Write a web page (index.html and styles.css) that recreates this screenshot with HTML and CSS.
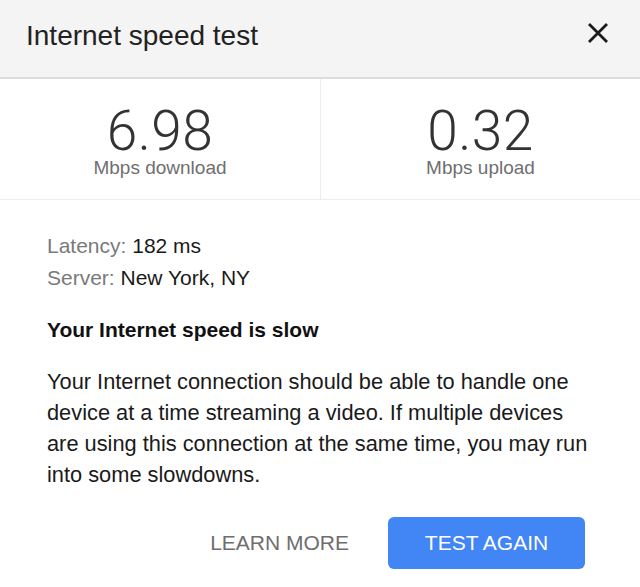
FILE: index.html
```html
<!DOCTYPE html>
<html>
<head>
<meta charset="utf-8">
<link rel="stylesheet" href="styles.css">
</head>
<body>
<div class="dialog">
  <header class="header">
    <h1 class="title">Internet speed test</h1>
    <button class="close" aria-label="Close">
      <svg width="22" height="22" viewBox="0 0 22 22"><path d="M2 2L20 20M20 2L2 20" stroke="#1a1a1a" stroke-width="2.8" fill="none"/></svg>
    </button>
  </header>
  <section class="stats">
    <div class="stat">
      <div class="value">6.98</div>
      <div class="unit">Mbps download</div>
    </div>
    <div class="stat">
      <div class="value">0.32</div>
      <div class="unit">Mbps upload</div>
    </div>
  </section>
  <section class="body">
    <div class="meta">
      <div><span class="label">Latency:</span> 182 ms</div>
      <div><span class="label">Server:</span> New York, NY</div>
    </div>
    <h2 class="verdict">Your Internet speed is slow</h2>
    <p class="desc">Your Internet connection should be able to handle one device at a time streaming a video. If multiple devices are using this connection at the same time, you may run into some slowdowns.</p>
    <div class="actions">
      <button class="link">LEARN MORE</button>
      <button class="primary">TEST AGAIN</button>
    </div>
  </section>
</div>
</body>
</html>
```
FILE: styles.css
```css
html, body {
  margin: 0;
  padding: 0;
  background: #ffffff;
}
body {
  font-family: "Liberation Sans", Arial, sans-serif;
  color: #1f1f1f;
  width: 640px;
  height: 587px;
  overflow: hidden;
}
.header {
  height: 77px;
  background: #f4f4f4;
  border-bottom: 2px solid #dcdcdc;
  display: flex;
  align-items: center;
  justify-content: space-between;
  padding: 0 31px 0 26px;
  box-sizing: content-box;
}
.title {
  margin: 0;
  font-size: 28px;
  font-weight: normal;
  color: #222;
  margin-top: -6px;
}
.close {
  border: 0;
  background: none;
  padding: 0;
  width: 22px;
  height: 22px;
  margin-top: -12px;
  display: flex;
}
.stats {
  display: grid;
  grid-template-columns: 1fr 1fr;
  height: 120px;
  border-bottom: 1px solid #ececec;
}
.stat {
  display: flex;
  flex-direction: column;
  align-items: center;
  padding-top: 28px;
}
.stat + .stat {
  border-left: 1px solid #ececec;
}
.value {
  font-family: Roboto, "Liberation Sans", sans-serif;
  font-weight: 300;
  font-size: 55px;
  line-height: 48px;
  color: #333;
  letter-spacing: 0.5px;
}
.unit {
  font-size: 19px;
  line-height: 22px;
  color: #6f6f6f;
  margin-top: 2px;
}
.body {
  padding: 30px 47px 0 47px;
}
.meta {
  font-size: 21px;
  line-height: 32px;
  color: #1a1a1a;
}
.label {
  color: #7a7a7a;
}
.verdict {
  margin: 22px 0 0;
  font-size: 21px;
  font-weight: bold;
  line-height: 28px;
  color: #111;
}
.desc {
  margin: 22px 0 0;
  font-size: 21.8px;
  line-height: 31px;
  color: #1a1a1a;
}
.actions {
  display: flex;
  justify-content: flex-end;
  align-items: center;
  gap: 39px;
  margin-top: 27px;
  padding-right: 8px;
}
.link {
  border: 0;
  background: none;
  font-family: "Liberation Sans", Arial, sans-serif;
  font-size: 21px;
  color: #6e6e6e;
  padding: 0;
}
.primary {
  border: 0;
  background: #4285f4;
  color: #fff;
  font-family: "Liberation Sans", Arial, sans-serif;
  font-size: 21px;
  width: 197px;
  height: 52px;
  border-radius: 6px;
  padding: 0;
}
```
